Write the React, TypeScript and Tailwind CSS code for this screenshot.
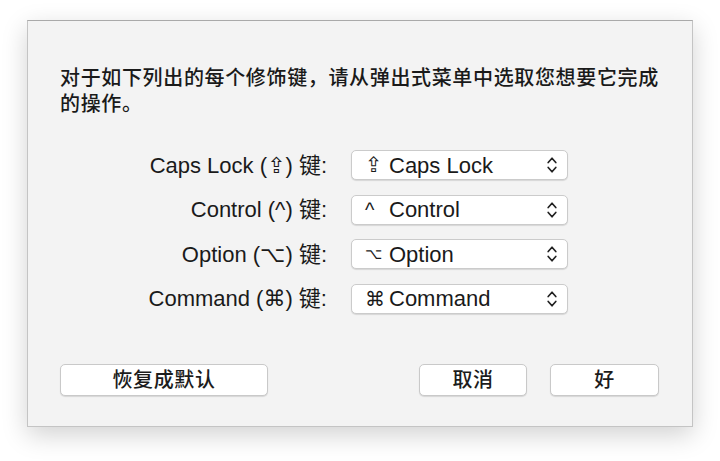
import React from 'react'

const font = { fontFamily: '"Liberation Sans", "DejaVu Sans", "Noto Sans CJK SC", sans-serif' }

const rows = [
  { label: 'Caps Lock (⇪) 键:', icon: '⇪', iconCls: 'text-[21px]', value: 'Caps Lock' },
  { label: 'Control (^) 键:', icon: '^', iconCls: 'text-[20px]', value: 'Control' },
  { label: 'Option (⌥) 键:', icon: '⌥', iconCls: 'text-[15px]', value: 'Option' },
  { label: 'Command (⌘) 键:', icon: '⌘', iconCls: 'text-[20px]', value: 'Command' },
]

function Chevrons() {
  return (
    <svg width="10" height="18" viewBox="0 0 10 18" fill="none" stroke="#222" strokeWidth="1.7" strokeLinecap="round" strokeLinejoin="round">
      <path d="M1.2 6.5 L5 2.2 L8.8 6.5" />
      <path d="M1.2 11.5 L5 15.8 L8.8 11.5" />
    </svg>
  )
}

function Button({ children, w }: { children: React.ReactNode; w: string }) {
  return (
    <button className={`${w} h-[32px] rounded-[5px] bg-white border border-[#c9c9c9] shadow-[0_1px_1px_rgba(0,0,0,0.12)] text-[20px] font-medium tracking-[0.6px] text-[#1c1c1c] leading-none`}>
      {children}
    </button>
  )
}

export default function App() {
  return (
    <div className="w-[720px] h-[461px] bg-white pl-[27px] pt-[20px]" style={font}>
      <div className="w-[666px] h-[407px] bg-[#f3f3f3] border border-[#c4c4c4] border-t-[#a9a9a9] shadow-[0_8px_24px_rgba(0,0,0,0.18)] flex flex-col">
        <p className="pt-[44px] pl-[32px] pr-[20px] text-[20px] font-medium tracking-[0.65px] leading-[26px] text-[#1a1a1a]">
          对于如下列出的每个修饰键，请从弹出式菜单中选取您想要它完成的操作。
        </p>

        <div className="mt-[33px] flex flex-col gap-[14.5px]">
          {rows.map((r) => (
            <div key={r.label} className="flex items-center h-[30px]">
              <div className="w-[299px] text-right text-[22px] text-[#1a1a1a] whitespace-nowrap">{r.label}</div>
              <div className="ml-[24px] w-[217px] h-[30px] rounded-[5px] bg-white border border-[#cbcbcb] shadow-[0_1px_1px_rgba(0,0,0,0.12)] flex items-center justify-between pl-[13px] pr-[10px]">
                <span className="text-[22px] text-[#1a1a1a] whitespace-nowrap flex items-center">
                  <span className={`inline-block w-[24px] text-left ${r.iconCls}`}>{r.icon}</span>
                  <span>{r.value}</span>
                </span>
                <Chevrons />
              </div>
            </div>
          ))}
        </div>

        <div className="mt-auto mb-[30px] flex items-center pl-[32px] pr-[33px]">
          <Button w="w-[208px]">恢复成默认</Button>
          <div className="flex-1" />
          <Button w="w-[108px]">取消</Button>
          <div className="w-[23px]" />
          <Button w="w-[109px]">好</Button>
        </div>
      </div>
    </div>
  )
}
